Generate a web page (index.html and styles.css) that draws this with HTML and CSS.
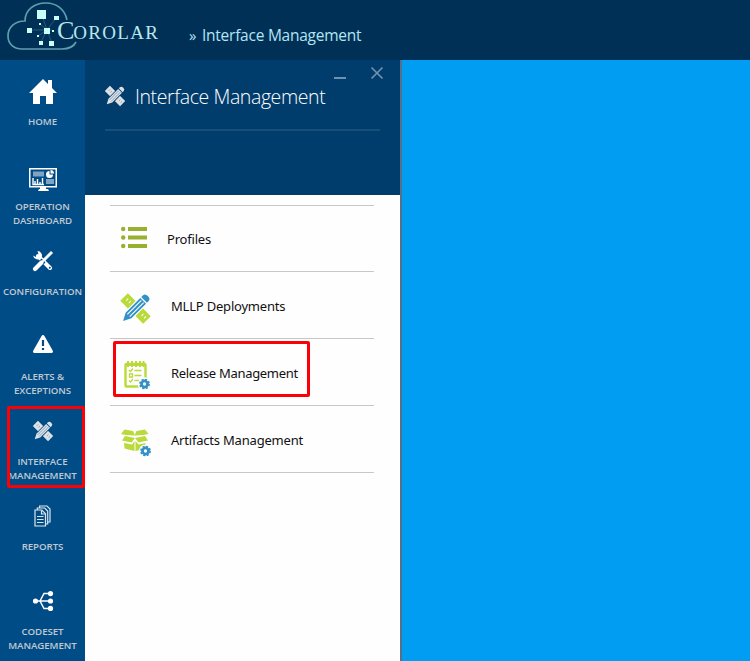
FILE: index.html
```html
<!DOCTYPE html>
<html lang="en">
<head>
<meta charset="utf-8">
<title>Corolar - Interface Management</title>
<link rel="stylesheet" href="styles.css">
</head>
<body>
<svg class="defs" width="0" height="0" aria-hidden="true">
  <defs>
    <symbol id="tools" viewBox="0 0 30 30" overflow="visible">
      <g transform="rotate(45 15 15)">
        <rect class="ruler" x="-3" y="9" width="36" height="12"/>
        <path class="notch" d="M1.500 13v3M5.500 13v3M25.500 13v3M29.500 13v3"/>
      </g>
      <g transform="rotate(45 15 15)">
        <path class="gap" d="M9.200 0h11.600v26l-5.800 10-5.800-10z"/>
        <path class="pencil" d="M10.500-1Q10.500-4.500 15-4.500T19.500-1v2.500h-9zM10.500 3h9v23L15 34.500 10.500 26z"/>
        <path class="stripe" d="M13.200 4v22M16.800 4v22"/>
      </g>
    </symbol>
    <symbol id="gear" viewBox="-6 -6 12 12">
      <circle r="3.300" fill="none" stroke="#3292c5" stroke-width="3"/>
      <circle r="5" fill="none" stroke="#3292c5" stroke-width="1.800" stroke-dasharray="2.300 1.627"/>
    </symbol>
  </defs>
</svg>
<header class="topbar">
  <div class="logo">
    <svg class="cloud" width="80" height="54" viewBox="0 0 80 54">
      <path d="M67 20C65 9 56 3 46 3 34 3 25 10 25 21 15 21 8 27 8 36s7 13 14 13h40c8 0 12-3 14-7" fill="none" stroke="#5b9fae" stroke-width="1.700"/>
      <path d="M42 15l5 15 9-12M30 30h22M47 30l-6 12M47 30l5 13M40 24l7 6-9 6" fill="none" stroke="#28678a" stroke-width=".8"/>
      <path d="M37 10h9v9h-9zM54 16h5v4h-5zM27 28h5v5h-5zM44 28h6v6h-6zM49 41h5v5h-5zM39 41h4v4h-4zM39 23h2v2h-2zM37 35h2v2h-2zM52 30h2v2h-2z" fill="#c9fff9"/>
    </svg>
    <span class="brand"><span class="initial">C</span>OROLAR</span>
  </div>
  <div class="crumb"><span class="chevrons">»</span><span>Interface Management</span></div>
</header>
<div class="workspace">
  <nav class="sidebar">
    <a class="item"><span class="icon"><svg width="28" height="26" viewBox="0 0 28 26"><path d="M14 0l5 5V1h4v8l5 5h-4v11h-7v-8h-6v8H4V14H0z" fill="#fff"/></svg></span><span class="label">HOME</span></a>
    <a class="item"><span class="icon dashboard"><svg width="28" height="26" viewBox="0 0 28 26"><path d="M.75 1.750h26.500v18H.75z" fill="none" stroke="#fff" stroke-width="1.500"/><path d="M11 20h6v2h2l1 2H9l1-2h1z" fill="#fff"/><path d="M4 4.500h11v5H4zM17 12h8v5h-8z" fill="#7fa3c0"/><path d="M4 11v6.500h11M6 17v-3M8.500 17v-5M11 17v-2M13.500 17v-6" fill="none" stroke="#fff" stroke-width="1.400"/><path d="M20.500 4v3.500H24A3.500 3.500 0 1 1 20.500 4z" fill="#fff"/><path d="M21.500 3a3.500 3.500 0 0 1 3.500 3.500h-3.500z" fill="#fff"/></svg></span><span class="label">OPERATION<br>DASHBOARD</span></a>
    <a class="item"><span class="icon raised"><svg width="22" height="22" viewBox="0 0 22 22"><path d="M6 6l12 12" stroke="#fff" stroke-width="4" stroke-linecap="round"/><path d="M5.500 1a4.500 4.500 0 0 1 4 6.500A4.800 4.800 0 0 1 1 5.500l3 1.500L6.500 4.500z" fill="#fff"/><path d="M19 1.500L20.500 3l-8 8-1.500-1.500z" fill="#fff" stroke="#fff" stroke-linejoin="round"/><path d="M11.500 10.500l-8 8" stroke="#004c87" stroke-width="5.500"/><path d="M9.500 12.500l-6.500 6.500" stroke="#fff" stroke-width="4.200" stroke-linecap="round"/><path d="M13 9l-5 5" stroke="#fff" stroke-width="2"/><circle cx="17.800" cy="17.800" r="1" fill="#004c87"/></svg></span><span class="label">CONFIGURATION</span></a>
    <a class="item"><span class="icon alert"><svg width="22" height="20" viewBox="0 0 22 20"><path d="M11 2.500l8.500 15h-17z" fill="#fff" stroke="#fff" stroke-width="3" stroke-linejoin="round"/><path d="M11 6v6M11 14v2" stroke="#004c87" stroke-width="2.200"/></svg></span><span class="label">ALERTS &amp;<br>EXCEPTIONS</span></a>
    <a class="item current"><span class="icon raised"><svg class="tools light" width="18" height="18"><use href="#tools"/></svg></span><span class="label">INTERFACE<br>MANAGEMENT</span></a>
    <a class="item"><span class="icon raised"><svg width="17" height="22" viewBox="0 0 17 22"><g fill="#004c87" stroke="#dce5ec" stroke-width="1.200"><path d="M5.600 1h7.400l3 3v13h-10.400z"/><path d="M3.300 3h7.400l3 3v13H3.300z"/><path d="M1 5h6.800l3.700 3.700V21H1z"/></g><path d="M3 11.500h6.500M3 14.500h6.500M3 17.500h6.500M7.500 5.500v3.500H11" stroke="#dce5ec" stroke-width="1.200" fill="none"/></svg></span><span class="label">REPORTS</span></a>
    <a class="item"><span class="icon raised"><svg width="22" height="20" viewBox="0 0 22 20"><path d="M2 10h16M8 10l4-7.500h6M8 10l4 7.500h6" fill="none" stroke="#fff" stroke-width="1.500"/><circle cx="3.500" cy="10" r="2.600" fill="#fff"/><circle cx="18.500" cy="2.600" r="2.600" fill="#fff"/><circle cx="18.500" cy="10" r="2.600" fill="#fff"/><circle cx="18.500" cy="17.400" r="2.600" fill="#fff"/></svg></span><span class="label">CODESET<br>MANAGEMENT</span></a>
  </nav>
  <main class="panel">
    <div class="panel-head">
      <div class="controls"><svg width="50" height="14" viewBox="0 0 50 14"><path d="M0 12h12" stroke="#7092ae" stroke-width="2"/><path d="M37.500 1.500l11 11M48.500 1.500l-11 11" stroke="#7092ae" stroke-width="1.700"/></svg></div>
      <div class="title"><svg class="tools light dim" width="18" height="18"><use href="#tools"/></svg><h1>Interface Management</h1></div>
    </div>
    <ul class="menu">
      <li><span class="pic"><svg width="27" height="23" viewBox="0 0 27 23" fill="#98b02f"><circle cx="2.200" cy="3" r="2.200"/><circle cx="2.200" cy="11.500" r="2.200"/><circle cx="2.200" cy="20" r="2.200"/><path d="M7 1h19v4H7zM7 9.500h19v4H7zM7 18h19v4H7z"/></svg></span><span class="name">Profiles</span></li>
      <li><span class="pic deploy"><svg class="tools color" width="27" height="27"><use href="#tools"/></svg></span><span class="name mllp">MLLP Deployments</span></li>
      <li><span class="pic release"><svg width="28" height="30" viewBox="0 0 28 30"><rect x="1.500" y="4" width="20" height="22.500" rx="1" fill="none" stroke="#bada3b" stroke-width="2.400"/><path d="M2 5h19M4 1v6M8 1v6M12 1v6M16 1v6M19.500 1v6" stroke="#bada3b" stroke-width="2"/><path d="M10.500 10.500h7M10.500 15.500h7M10.500 20.500h5M5 10l1.500 1.500L9 8.500M5.500 14h3v3h-3zM5 20.500L6.500 22 9 19" fill="none" stroke="#bada3b" stroke-width="1.300"/><circle cx="20.500" cy="24" r="6.800" fill="#fefefe"/><use href="#gear" x="15" y="18.500" width="11" height="11"/></svg></span><span class="name rel">Release Management</span></li>
      <li><span class="pic box"><svg width="31" height="28" viewBox="0 0 31 28"><path d="M3.500 .5L12 2l2 4.500-9-.5L0 5zM24 .5L15.500 2l-2 4.500 9-.5L27.500 5zM4 7l10 2-3.500 4.500L1 11.500zM24 7l-10 2 3.500 4.500 9.500-2zM3 14l8 1.500 2.500-3.500v10L3.500 19.500zM24.500 14l-7 1.500-3-3.500v10l10-2.500z" fill="#bada3b"/><circle cx="24.500" cy="22" r="6.600" fill="#fefefe"/><use href="#gear" x="19" y="16.500" width="11" height="11"/></svg></span><span class="name art">Artifacts Management</span></li>
    </ul>
  </main>
  <div class="canvas"></div>
</div>
<div class="marker nav-marker"></div>
<div class="marker menu-marker"></div>
</body>
</html>
```
FILE: styles.css
```css
* { box-sizing: border-box; }
body { margin: 0; width: 750px; height: 661px; overflow: hidden; position: relative; font-family: "Noto Sans", "Open Sans", sans-serif; background: #004c87; }
.defs { position: absolute; }
svg { display: block; flex: none; }
.topbar { height: 60px; background: #003056; display: flex; }
.logo { width: 189px; display: flex; position: relative; }
.cloud { flex: none; }
.brand { position: absolute; left: 57px; top: 17px; line-height: 28px; font-family: "Liberation Serif", serif; font-size: 19px; color: #b9e7ec; letter-spacing: 1.300px; white-space: nowrap; }
.initial { font-size: 26px; letter-spacing: -1px; }
.crumb { display: flex; padding-top: 24px; font-family: "Open Sans", sans-serif; font-size: 15.500px; letter-spacing: -.25px; line-height: 23px; color: #b3e5f3; white-space: nowrap; }
.chevrons { width: 13px; font-size: 15px; }
.workspace { display: flex; height: 601px; }
.sidebar { width: 85px; background: #004c87; flex: none; }
.item { display: flex; flex-direction: column; height: 85px; align-items: center; }
.icon { height: 55px; padding-top: 9px; display: flex; align-items: center; flex: none; }
.dashboard { padding-top: 15px; }
.raised { padding-top: 7px; }
.alert { padding-top: 2px; }
.label { font-family: "Open Sans", sans-serif; font-size: 9.700px; font-weight: 600; letter-spacing: -.07px; line-height: 14px; color: #c0c9d0; text-align: center; white-space: nowrap; }
.panel { width: 317px; flex: none; background: #fefefe; border-right: 2px solid #52718d; }
.panel-head { height: 135px; background: #003d6d; padding: 6px 16px 0 20px; }
.controls { display: flex; justify-content: flex-end; }
.title { display: flex; align-items: center; gap: 11px; height: 51px; padding: 0 0 18px 1px; margin-right: 4px; border-bottom: 2px solid #174f7b; }
h1 { font-family: "Open Sans", sans-serif; font-size: 19.500px; letter-spacing: -.4px; font-weight: 300; line-height: 26px; padding-top: 2px; color: #fff; margin: 0; white-space: nowrap; }
.tools { overflow: visible; }
.light { --ruler: #dce1e6; --pencil: #dce1e6; --back: #004c87; --mark: #6d8aa5; }
.dim { --back: #003d6d; }
.color { --ruler: #bada3b; --pencil: #3292c5; --back: #fefefe; --mark: #fefefe; }
.ruler { fill: var(--ruler); }
.pencil { fill: var(--pencil); }
.gap { fill: var(--back); }
.notch, .stripe { fill: none; stroke: var(--mark); stroke-width: 1.200; }
.menu { list-style: none; margin: 10px 26px 0 25px; padding: 0; border-top: 1px solid #c4c8cb; }
.menu li { height: 67px; display: flex; align-items: center; border-bottom: 1px solid #c4c8cb; }
.menu li:first-child { height: 66px; }
.pic { width: 61px; padding-left: 11px; flex: none; }
.menu li:first-child .pic { width: 57px; padding-bottom: 3px; }
.deploy { padding: 7px 0 0 12px; }
.release { padding-left: 14px; padding-top: 6px; }
.box { padding-top: 8px; }
.name { font-size: 13px; letter-spacing: -.2px; color: #111; white-space: nowrap; padding-top: 1px; }
.rel { letter-spacing: -.3px; }
.art { letter-spacing: -.2px; }
.marker { position: absolute; border: 3px solid #fb0007; border-radius: 2px; }
.nav-marker { left: 7px; top: 406px; width: 78px; height: 82px; }
.menu-marker { left: 113px; top: 341px; width: 197px; height: 56px; }
.canvas { flex: 1; background: #009df3; }
```
